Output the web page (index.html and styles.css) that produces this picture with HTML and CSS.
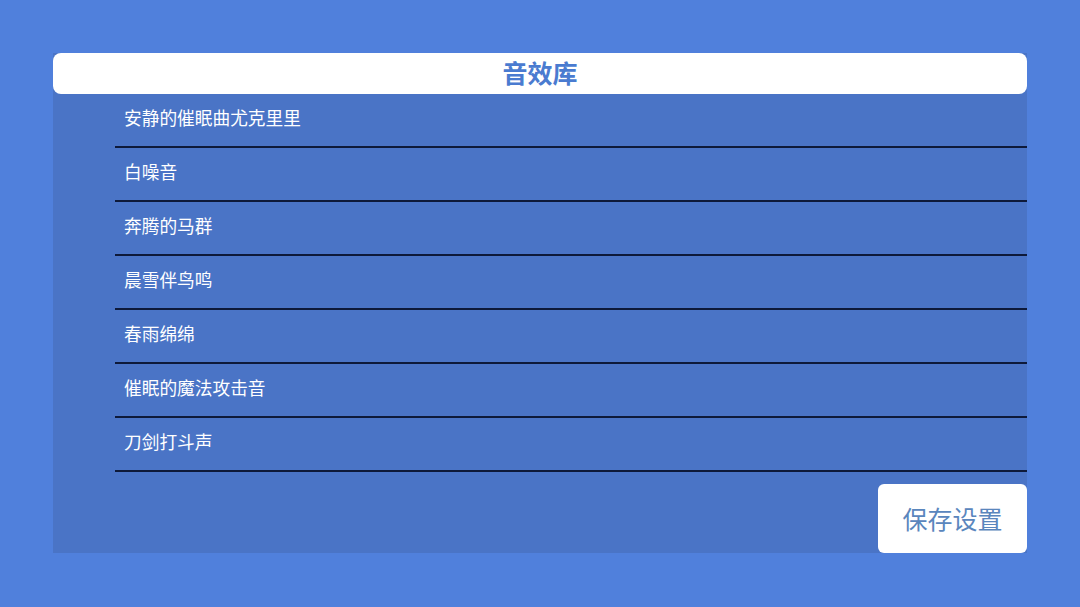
FILE: index.html
```html
<!DOCTYPE html>
<html lang="zh-CN">
<head>
<meta charset="utf-8">
<title>音效库</title>
<link rel="stylesheet" href="styles.css">
</head>
<body>
<div class="panel">
  <div class="header">音效库</div>
  <ul class="list">
    <li class="item">安静的催眠曲尤克里里</li>
    <li class="item">白噪音</li>
    <li class="item">奔腾的马群</li>
    <li class="item">晨雪伴鸟鸣</li>
    <li class="item">春雨绵绵</li>
    <li class="item">催眠的魔法攻击音</li>
    <li class="item">刀剑打斗声</li>
  </ul>
  <div class="footer">
    <button class="save">保存设置</button>
  </div>
</div>
</body>
</html>
```
FILE: styles.css
```css
html, body {
  margin: 0;
  padding: 0;
}
body {
  background: #5080dc;
  width: 1080px;
  height: 607px;
  overflow: hidden;
  font-family: "Noto Sans CJK SC", "Noto Sans", sans-serif;
}
.panel {
  margin: 53px 53px 0 53px;
  width: 974px;
  height: 500px;
  background: #4a74c6;
  display: flex;
  flex-direction: column;
}
.header {
  height: 41px;
  box-sizing: border-box;
  padding-bottom: 4px;
  background: #ffffff;
  border-radius: 8px;
  display: flex;
  align-items: center;
  justify-content: center;
  color: #4a7bd0;
  font-size: 25px;
  font-weight: bold;
}
.list {
  list-style: none;
  margin: 0 0 0 62px;
  padding: 0;
}
.item {
  height: 54px;
  box-sizing: border-box;
  padding: 0 0 6px 9px;
  border-bottom: 2px solid #0e1a3a;
  display: flex;
  align-items: center;
  color: #ffffff;
  font-size: 17.7px;
}
.footer {
  display: flex;
  justify-content: flex-end;
  margin-top: 12px;
}
.save {
  width: 149px;
  height: 69px;
  background: #ffffff;
  border: none;
  border-radius: 6px;
  color: #5a86bd;
  font-family: "Noto Sans CJK SC", "Noto Sans", sans-serif;
  font-size: 25px;
  padding: 0 0 2px 0;
}
```
